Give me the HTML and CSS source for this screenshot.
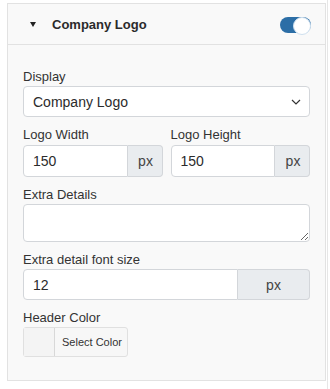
FILE: index.html
```html
<!DOCTYPE html>
<html lang="en">
<head>
    <meta charset="UTF-8">
    <meta name="viewport" content="width=device-width, initial-scale=1.0">
    <title>Company Logo Settings</title>
<link rel="stylesheet" href="styles.css">
</head>
<body>
    <div class="sidebar">
        <div class="panel">
            <div class="panel-header">
                <span class="caret"></span>
                <span class="panel-title">Company Logo</span>
                <label class="switch">
                    <input type="checkbox" checked>
                    <span class="slider"></span>
                </label>
            </div>

            <div class="panel-body">
                <div class="form-group">
                    <label for="display">Display</label>
                    <div class="select-wrap">
                        <select id="display" class="input select">
                            <option>Company Logo</option>
                            <option>Company Name</option>
                        </select>
                        <svg class="chevron" width="10" height="6" viewBox="0 0 10 6">
                            <path d="M1 1 L5 5 L9 1" fill="none" stroke="#333" stroke-width="1.2"/>
                        </svg>
                    </div>
                </div>

                <div class="form-row">
                    <div class="form-group">
                        <label for="logoWidth">Logo Width</label>
                        <div class="input-group">
                            <input type="text" id="logoWidth" class="input" value="150">
                            <span class="addon addon-sm">px</span>
                        </div>
                    </div>
                    <div class="form-group">
                        <label for="logoHeight">Logo Height</label>
                        <div class="input-group">
                            <input type="text" id="logoHeight" class="input" value="150">
                            <span class="addon addon-sm">px</span>
                        </div>
                    </div>
                </div>

                <div class="form-group">
                    <label for="extraDetails">Extra Details</label>
                    <textarea id="extraDetails" class="input textarea"></textarea>
                </div>

                <div class="form-group">
                    <label for="extraSize">Extra detail font size</label>
                    <div class="input-group">
                        <input type="text" id="extraSize" class="input" value="12">
                        <span class="addon addon-lg">px</span>
                    </div>
                </div>

                <div class="form-group">
                    <label>Header Color</label>
                    <div class="color-picker">
                        <span class="swatch"></span>
                        <span class="color-text">Select Color</span>
                    </div>
                </div>
            </div>
        </div>
    </div>
</body>
</html>
```

FILE: styles.css
```css
/* Global Styles */
:root {
    --foreground: #333333;
    --panel-bg: #f9f9f9;
    --panel-border: #e2e2e2;
    --input-border: #d3d6da;
    --addon-bg: #e9ecef;
    --toggle: #2c6ea6;
    --radius: 4px;
}

* {
    margin: 0;
    padding: 0;
    box-sizing: border-box;
}

body {
    font-family: "Liberation Sans", Arial, sans-serif;
    color: var(--foreground);
    background-color: #ffffff;
}

.sidebar {
    width: 328px;
    min-height: 389px;
    border-right: 1px solid #e6e6e6;
    padding: 3px 0 0 7px;
}

/* Panel */
.panel {
    width: 319px;
    height: 378px;
    background-color: var(--panel-bg);
    border: 1px solid var(--panel-border);
}

.panel-header {
    display: flex;
    align-items: center;
    height: 41px;
    padding: 0 14px 0 22px;
    border-bottom: 1px solid var(--panel-border);
}

.caret {
    width: 0;
    height: 0;
    border-left: 3.5px solid transparent;
    border-right: 3.5px solid transparent;
    border-top: 5px solid #222;
    margin-right: 16px;
    margin-top: 1px;
}

.panel-title {
    flex: 1;
    font-size: 13px;
    font-weight: bold;
    color: #2b2b2b;
}

/* Toggle */
.switch {
    position: relative;
    width: 31px;
    height: 16px;
    margin-top: 2px;
}

.switch input {
    display: none;
}

.slider {
    position: absolute;
    inset: 0;
    background-color: var(--toggle);
    border-radius: 8px;
}

.slider::after {
    content: "";
    position: absolute;
    right: 0;
    top: 0;
    width: 16px;
    height: 16px;
    border-radius: 50%;
    background: #ffffff;
    border: 1px solid #cfe0ef;
}

/* Form Elements */
.panel-body {
    padding: 23px 15px 0 15px;
}

.form-group {
    margin-bottom: 9px;
}

label {
    display: block;
    font-size: 13px;
    line-height: 18px;
    color: var(--foreground);
}

.input {
    display: block;
    width: 100%;
    height: 32px;
    padding: 0 9px;
    border: 1px solid var(--input-border);
    border-radius: var(--radius);
    background-color: #ffffff;
    font-family: inherit;
    font-size: 14px;
    color: #2b2b2b;
    outline: none;
}

.select-wrap {
    position: relative;
}

.select {
    height: 31px;
    appearance: none;
    -webkit-appearance: none;
}

.chevron {
    position: absolute;
    right: 9px;
    top: 13px;
}

.form-row {
    display: grid;
    grid-template-columns: 1fr 1fr;
    gap: 8px;
}

.form-row label {
    margin-bottom: 1px;
}

.input-group {
    display: flex;
}

.input-group .input {
    flex: 1;
    min-width: 0;
    border-top-right-radius: 0;
    border-bottom-right-radius: 0;
}

.addon {
    display: flex;
    align-items: center;
    justify-content: center;
    background-color: var(--addon-bg);
    border: 1px solid var(--input-border);
    border-left: none;
    border-radius: 0 var(--radius) var(--radius) 0;
    font-size: 14px;
    color: #444;
}

.addon-sm {
    width: 35px;
    padding-left: 2px;
}

.addon-lg {
    width: 72px;
}

.textarea {
    height: 38px;
    resize: vertical;
    padding: 6px 9px;
}

#extraSize {
    height: 31px;
}

/* Color picker */
.color-picker {
    display: flex;
    width: 105px;
    height: 30px;
    border: 1px solid #e0e0e0;
    border-radius: 3px;
    background-color: #f7f7f7;
}

.swatch {
    width: 31px;
    border-right: 1px solid #d8d8d8;
    background-color: #f4f4f4;
}

.color-text {
    display: flex;
    align-items: center;
    padding-left: 7px;
    font-size: 11px;
    color: #333;
}
```
